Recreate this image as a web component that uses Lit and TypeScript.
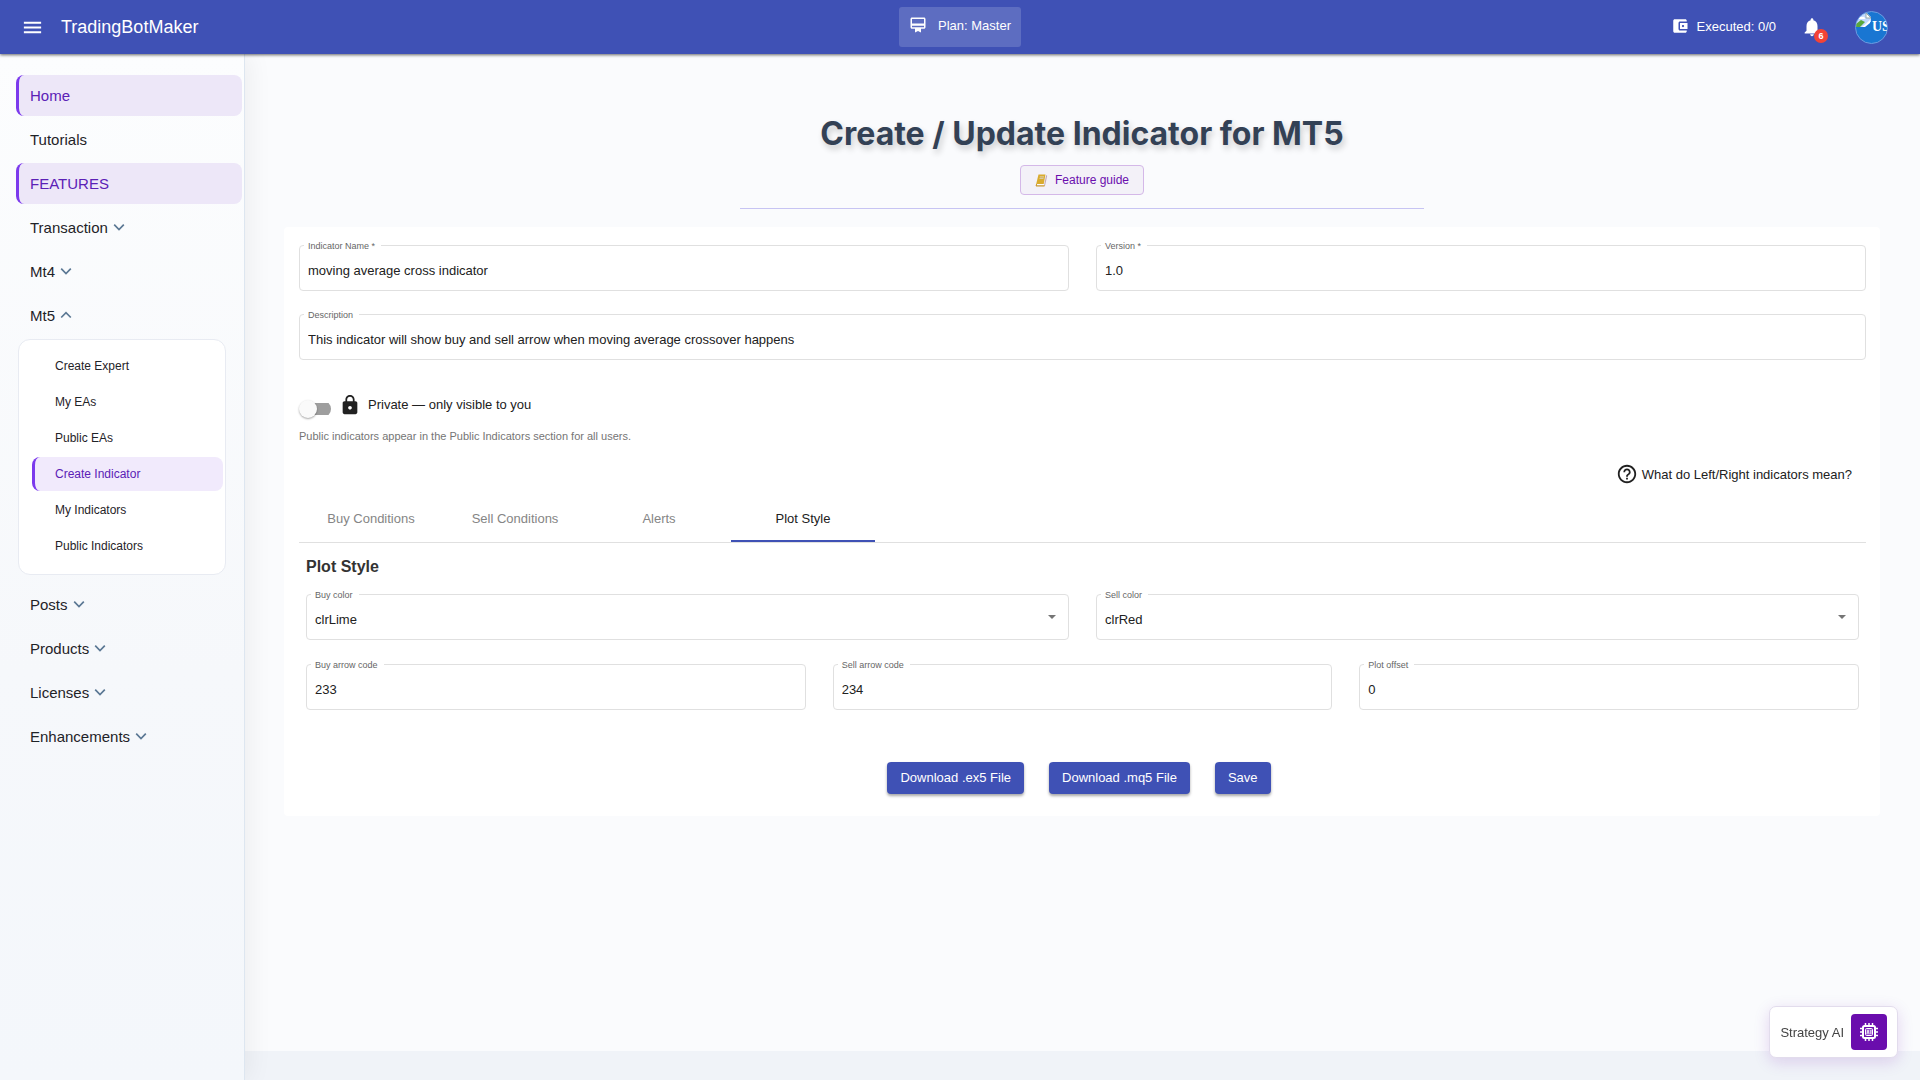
import { LitElement, html, css, svg } from "lit";
import { customElement, property, state } from "lit/decorators.js";
import { classMap } from "lit/directives/class-map.js";

const ICONS = {
  menu: "M3 18h18v-2H3v2zm0-5h18v-2H3v2zm0-7v2h18V6H3z",
  plan: "M20 2H4c-1.11 0-2 .89-2 2v11c0 1.11.89 2 2 2h4v5l4-2 4 2v-5h4c1.11 0 2-.89 2-2V4c0-1.11-.89-2-2-2zm0 13H4v-2h16v2zm0-5H4V4h16v6z",
  wallet:
    "M21 18v1c0 1.1-.9 2-2 2H5c-1.11 0-2-.9-2-2V5c0-1.1.89-2 2-2h14c1.1 0 2 .9 2 2v1h-9c-1.11 0-2 .9-2 2v8c0 1.1.89 2 2 2h9zm-9-2h10V8H12v8zm4-2.5c-.83 0-1.5-.67-1.5-1.5s.67-1.5 1.5-1.5 1.5.67 1.5 1.5-.67 1.5-1.5 1.5z",
  bell: "M12 22c1.1 0 2-.9 2-2h-4c0 1.1.89 2 2 2zm6-6v-5c0-3.07-1.64-5.64-4.5-6.32V4c0-.83-.67-1.5-1.5-1.5s-1.5.67-1.5 1.5v.68C7.63 5.36 6 7.92 6 11v5l-2 2v1h16v-1l-2-2z",
  lock: "M18 8h-1V6c0-2.76-2.24-5-5-5S7 3.24 7 6v2H6c-1.1 0-2 .9-2 2v10c0 1.1.9 2 2 2h12c1.1 0 2-.9 2-2V10c0-1.1-.9-2-2-2zm-6 9c-1.1 0-2-.9-2-2s.9-2 2-2 2 .9 2 2-.9 2-2 2zm3.1-9H8.9V6c0-1.71 1.39-3.1 3.1-3.1 1.71 0 3.1 1.39 3.1 3.1v2z",
  help: "M11 18h2v-2h-2v2zm1-16C6.48 2 2 6.48 2 12s4.48 10 10 10 10-4.48 10-10S17.52 2 12 2zm0 18c-4.41 0-8-3.59-8-8s3.59-8 8-8 8 3.59 8 8-3.59 8-8 8zm0-14c-2.21 0-4 1.79-4 4h2c0-1.1.9-2 2-2s2 .9 2 2c0 2-3 1.75-3 5h2c0-2.25 3-2.5 3-5 0-2.21-1.79-4-4-4z",
};

const icon = (name: keyof typeof ICONS, size: number) => html`
  <svg class="icon" width=${size} height=${size} viewBox="0 0 24 24" fill="currentColor" aria-hidden="true">
    <path d=${ICONS[name]}></path>
  </svg>
`;

@customElement("top-bar")
class TopBar extends LitElement {
  static styles = css`
    :host {
      display: block;
      position: relative;
      z-index: 2;
      color: #fff;
      background: #3f51b5;
      box-shadow: 0 1px 3px rgba(0, 0, 0, 0.6);
      font-size: 13px;
    }
    .bar {
      display: grid;
      grid-template-columns: 1fr auto 1fr;
      align-items: center;
      height: 54px;
      padding: 0 21px;
    }
    button {
      border: 0;
      padding: 0;
      background: none;
      color: inherit;
      font: inherit;
      cursor: pointer;
    }
    .icon {
      display: block;
    }
    .left {
      display: flex;
      align-items: center;
      gap: 17px;
    }
    .brand {
      font-size: 18px;
      color: inherit;
      text-decoration: none;
    }
    .plan {
      display: flex;
      align-items: flex-start;
      gap: 11px;
      height: 40px;
      padding: 9px 10px;
      box-sizing: border-box;
      border-radius: 3px;
      background: rgba(255, 255, 255, 0.16);
      line-height: 20px;
    }
    .right {
      display: flex;
      align-items: center;
      justify-content: flex-end;
      padding-right: 11px;
    }
    .executed {
      display: flex;
      align-items: flex-start;
      gap: 8px;
      margin-right: 25px;
      line-height: 20px;
    }
    .bell {
      position: relative;
      margin-right: 32px;
    }
    .badge {
      position: absolute;
      left: 13px;
      top: 13px;
      width: 14px;
      height: 14px;
      border-radius: 50%;
      background: #f44336;
      font-size: 9px;
      font-weight: 700;
      line-height: 14px;
      text-align: center;
    }
    .avatar {
      display: flex;
      align-items: center;
      width: 33px;
      height: 33px;
      box-sizing: border-box;
      border: 1px solid #6d9be0;
      border-radius: 50%;
      overflow: hidden;
      background: #1976d2;
      font-weight: 700;
      font-size: 14px;
      font-family: "Liberation Serif", serif;
    }
    .picture {
      flex: none;
      align-self: flex-start;
    }
  `;

  render() {
    return html`
      <header class="bar">
        <div class="left">
          <button aria-label="Toggle menu">${icon("menu", 23)}</button>
          <a class="brand" href="#">TradingBotMaker</a>
        </div>
        <button class="plan">${icon("plan", 18)}<span>Plan: Master</span></button>
        <div class="right">
          <span class="executed">${icon("wallet", 18)}<span>Executed: 0/0</span></span>
          <button class="bell" aria-label="Notifications">
            ${icon("bell", 22)}<span class="badge">6</span>
          </button>
          <button class="avatar" aria-label="Account">
            <svg class="picture" width="16" height="16" viewBox="0 0 16 16" aria-hidden="true">
              <path d="M0 1h11l4 4v5l-4 1-4 4H0z" fill="#c3d9ff"></path>
              <path d="M10 1v5h5z" fill="#fff" stroke="#9aa" stroke-width="1"></path>
              <path d="M3 7a2 2 0 0 1 3-2 2 2 0 0 1 3 2z" fill="#fff"></path>
              <path d="M0 12l5-4 4 2-5 5H0z" fill="#5aa83c"></path>
              <path d="M6 15l8-7v3l-5 4z" fill="#fff"></path>
            </svg>
            <span>US</span>
          </button>
        </div>
      </header>
    `;
  }
}

interface NavItem {
  label: string;
  active?: boolean;
  menu?: boolean;
  children?: { label: string; active?: boolean }[];
}

const NAV: NavItem[] = [
  { label: "Home", active: true },
  { label: "Tutorials" },
  { label: "FEATURES", active: true },
  { label: "Transaction", menu: true },
  { label: "Mt4", menu: true },
  {
    label: "Mt5",
    menu: true,
    children: [
      { label: "Create Expert" },
      { label: "My EAs" },
      { label: "Public EAs" },
      { label: "Create Indicator", active: true },
      { label: "My Indicators" },
      { label: "Public Indicators" },
    ],
  },
  { label: "Posts", menu: true },
  { label: "Products", menu: true },
  { label: "Licenses", menu: true },
  { label: "Enhancements", menu: true },
];

@customElement("side-nav")
class SideNav extends LitElement {
  static styles = css`
    :host {
      display: block;
      position: relative;
      z-index: 1;
      box-sizing: border-box;
      padding: 21px 2px 21px 16px;
      border-right: 1px solid #dde6f0;
      background: linear-gradient(#fcfdfe, #f6f8fb 60%, #f4f7fb);
      box-shadow: 4px 0 24px rgba(0, 0, 0, 0.06);
    }
    ul {
      display: flex;
      flex-direction: column;
      margin: 0;
      padding: 0;
      list-style: none;
    }
    .top {
      gap: 3px;
    }
    .item {
      display: flex;
      align-items: center;
      gap: 5px;
      width: 100%;
      height: 41px;
      box-sizing: border-box;
      padding: 0 11px 1px;
      border: 0;
      border-left: 3px solid transparent;
      border-radius: 8px;
      background: none;
      color: #1f2328;
      font: inherit;
      font-size: 15px;
      text-decoration: none;
      cursor: pointer;
    }
    .active {
      border-left-color: #7c3aed;
      background: #ede7f8;
      color: #5b21b6;
    }
    .sub {
      gap: 2px;
      margin: 3px 16px 6px 2px;
      padding: 9px 2px 11px 13px;
      border: 1px solid #e8ebf2;
      border-radius: 12px;
      background: #fff;
    }
    .sub .item {
      height: 34px;
      padding: 0 20px;
      font-size: 12px;
    }
    .sub .active {
      background: #f1eafc;
    }
  `;

  render() {
    return html`
      <nav aria-label="Main">
        <ul class="top">
          ${NAV.map(
            (n) => html`<li>
              ${n.menu
                ? html`<button class="item" aria-expanded=${n.children ? "true" : "false"}>
                    ${n.label}
                    <svg width="12" height="12" viewBox="0 0 12 12" fill="none" stroke="#5b7894" stroke-width="1.700" aria-hidden="true">
                      ${n.children
                        ? svg`<path d="M1.200 8.500l4.800-4.800 4.800 4.800"></path>`
                        : svg`<path d="M1.200 3.700l4.800 4.800 4.800-4.800"></path>`}
                    </svg>
                  </button>`
                : html`<a href="#" class=${classMap({ item: true, active: !!n.active })}>${n.label}</a>`}
              ${n.children
                ? html`<ul class="sub">
                    ${n.children.map(
                      (c) => html`<li>
                        <a href="#" class=${classMap({ item: true, active: !!c.active })}>${c.label}</a>
                      </li>`,
                    )}
                  </ul>`
                : ""}
            </li>`,
          )}
        </ul>
      </nav>
    `;
  }
}

@customElement("outlined-field")
class OutlinedField extends LitElement {
  @property() label = "";
  @property() value = "";
  @property({ type: Array }) options: string[] = [];

  static styles = css`
    :host {
      display: block;
      min-width: 0;
    }
    .field {
      position: relative;
      display: flex;
      border: 1px solid #e0e0e0;
      border-radius: 4px;
      background: #fff;
    }
    label {
      position: absolute;
      left: 4px;
      top: -5px;
      padding: 0 6px 0 4px;
      background: #fff;
      color: #666;
      font-size: 9px;
      line-height: 11px;
    }
    input,
    select {
      flex: 1;
      min-width: 0;
      height: 44px;
      box-sizing: border-box;
      margin: 0;
      padding: 5px 8px 1px;
      border: 0;
      outline: 0;
      border-radius: 4px;
      background: none;
      color: #212121;
      font: inherit;
      font-size: 13px;
      appearance: none;
    }
    .arrow {
      position: absolute;
      right: 12px;
      top: 20px;
      border: 4px solid transparent;
      border-top-color: #757575;
      border-bottom: 0;
      pointer-events: none;
    }
  `;

  render() {
    return html`
      <div class="field">
        ${this.options.length
          ? html`<select id="control">
                ${this.options.map((o) => html`<option ?selected=${o === this.value}>${o}</option>`)}
              </select>
              <span class="arrow"></span>`
          : html`<input id="control" type="text" .value=${this.value} />`}
        <label for="control">${this.label}</label>
      </div>
    `;
  }
}

@customElement("indicator-form")
class IndicatorForm extends LitElement {
  @state() private tab = "Plot Style";

  static styles = css`
    :host {
      display: block;
      padding: 18px 14px 22px 15px;
      border-radius: 4px;
      background: #fff;
      color: #212121;
      font-size: 13px;
    }
    .icon {
      display: block;
      flex: none;
    }
    .grid {
      display: grid;
      gap: 23px 27px;
    }
    .two {
      grid-template-columns: repeat(2, 1fr);
    }
    .three {
      grid-template-columns: repeat(3, 1fr);
    }
    .wide {
      grid-column: 1 / -1;
    }
    .visibility {
      display: flex;
      align-items: center;
      gap: 8px;
      margin-top: 31px;
      height: 27px;
    }
    .private {
      display: flex;
      align-items: center;
      gap: 7px;
    }
    .switch {
      align-self: flex-end;
      width: 32px;
      height: 18px;
      margin: 0;
      appearance: none;
      display: flex;
      align-items: center;
      background: linear-gradient(#9e9e9e, #9e9e9e) 8px 3px / 24px 12px no-repeat;
      border-radius: 9px;
      cursor: pointer;
    }
    .switch::before {
      content: "";
      width: 18px;
      height: 18px;
      border-radius: 50%;
      background: #fafafa;
      box-shadow: 0 1px 2px rgba(0, 0, 0, 0.35);
    }
    .hint {
      margin: 11px 0 0;
      color: #757575;
      font-size: 11px;
      line-height: 14px;
    }
    .help {
      display: flex;
      align-items: center;
      gap: 4px;
      margin: 20px 14px 12px auto;
      padding: 0;
      border: 0;
      background: none;
      color: inherit;
      font: inherit;
      cursor: pointer;
    }
    .tabs {
      display: flex;
      border-bottom: 1px solid #e0e0e0;
    }
    .tab {
      width: 144px;
      height: 45px;
      padding: 0 0 2px;
      border: 0;
      background: none;
      color: #858585;
      font: inherit;
      cursor: pointer;
    }
    .selected {
      padding: 0;
      border-bottom: 2px solid #3f51b5;
      color: #212121;
    }
    .panel {
      padding: 13px 7px 0;
    }
    .rows {
      display: grid;
      gap: 24px;
    }
    h2 {
      margin: 0 0 17px;
      color: #333;
      font-size: 16px;
      line-height: 21px;
    }
    .actions {
      display: flex;
      justify-content: center;
      gap: 25px;
      margin-top: 52px;
      padding-right: 7px;
    }
    .action {
      height: 32px;
      padding: 0 13px 1px;
      border: 0;
      border-radius: 4px;
      background: #3f51b5;
      color: #fff;
      font: inherit;
      font-weight: 500;
      box-shadow: 0 2px 3px rgba(0, 0, 0, 0.35);
      cursor: pointer;
    }
  `;

  render() {
    return html`
      <div class="grid two">
        <outlined-field label="Indicator Name *" value="moving average cross indicator"></outlined-field>
        <outlined-field label="Version *" value="1.0"></outlined-field>
        <outlined-field
          class="wide"
          label="Description"
          value="This indicator will show buy and sell arrow when moving average crossover happens"
        ></outlined-field>
      </div>
      <div class="visibility">
        <input class="switch" id="visibility" type="checkbox" role="switch" />
        <label class="private" for="visibility">${icon("lock", 22)}<span>Private — only visible to you</span></label>
      </div>
      <p class="hint">Public indicators appear in the Public Indicators section for all users.</p>
      <button class="help">${icon("help", 22)}<span>What do Left/Right indicators mean?</span></button>
      <div class="tabs" role="tablist">
        ${["Buy Conditions", "Sell Conditions", "Alerts", "Plot Style"].map(
          (t) => html`<button
            role="tab"
            aria-selected=${t === this.tab ? "true" : "false"}
            class=${classMap({ tab: true, selected: t === this.tab })}
            @click=${() => (this.tab = t)}
          >
            ${t}
          </button>`,
        )}
      </div>
      <section class="panel">
        <h2>Plot Style</h2>
        <div class="rows">
          <div class="grid two">
            <outlined-field label="Buy color" value="clrLime" .options=${["clrLime", "clrRed"]}></outlined-field>
            <outlined-field label="Sell color" value="clrRed" .options=${["clrLime", "clrRed"]}></outlined-field>
          </div>
          <div class="grid three">
            <outlined-field label="Buy arrow code" value="233"></outlined-field>
            <outlined-field label="Sell arrow code" value="234"></outlined-field>
            <outlined-field label="Plot offset" value="0"></outlined-field>
          </div>
        </div>
      </section>
      <div class="actions">
        <button class="action">Download .ex5 File</button>
        <button class="action">Download .mq5 File</button>
        <button class="action">Save</button>
      </div>
    `;
  }
}

@customElement("app-root")
class AppRoot extends LitElement {
  static styles = css`
    :host {
      display: flex;
      flex-direction: column;
      min-height: 100vh;
      font-family: "Liberation Sans", Arial, sans-serif;
      background: #f0f3f8;
    }
    .body {
      flex: 1;
      display: grid;
      grid-template-columns: 245px 1fr;
    }
    .page {
      display: flex;
      flex-direction: column;
      min-width: 0;
      margin-bottom: 29px;
      padding: 58px 40px 0 39px;
      background: #fafbfd;
    }
    .intro {
      display: flex;
      flex-direction: column;
      align-items: center;
      align-self: center;
      width: 684px;
      max-width: 100%;
      margin-bottom: 18px;
      padding-bottom: 13px;
      border-bottom: 1px solid #c7c4f3;
    }
    h1 {
      margin: 0 0 10px;
      color: #334155;
      font-family: Inter, sans-serif;
      font-size: 32px;
      font-weight: 700;
      line-height: 43px;
      text-align: center;
      text-shadow: 2px 4px 6px rgba(0, 0, 0, 0.2);
    }
    .guide {
      display: flex;
      align-items: center;
      gap: 7px;
      height: 30px;
      padding: 0 14px;
      border: 1px solid #d4b8e8;
      border-radius: 4px;
      background: #f3f1f8;
      color: #6a0dad;
      font: inherit;
      font-size: 12px;
      cursor: pointer;
    }
    .ai {
      position: fixed;
      right: 22px;
      bottom: 22px;
      z-index: 3;
      display: flex;
      align-items: center;
      gap: 7px;
      padding: 7px 10px;
      border: 1px solid #e2dcec;
      border-radius: 7px;
      background: #fff;
      box-shadow: 0 4px 16px rgba(106, 13, 173, 0.16);
      color: #444;
      font-size: 13px;
    }
    .chip {
      display: grid;
      place-items: center;
      width: 36px;
      height: 36px;
      padding: 0;
      border: 0;
      border-radius: 4px;
      background: #6a0dad;
      color: #fff;
      cursor: pointer;
    }
  `;

  render() {
    return html`
      <top-bar></top-bar>
      <div class="body">
        <side-nav></side-nav>
        <main class="page">
          <div class="intro">
            <h1>Create / Update Indicator for MT5</h1>
            <button class="guide">
              <svg width="13" height="13" viewBox="0 0 13 13" aria-hidden="true">
                <path d="M3.500 .5h7L8.700 10H1.200z" fill="#d9ab2e"></path>
                <path d="M11.200 1l1 .8-2.200 10-.9-.6z" fill="#c3a9b4"></path>
                <path d="M1.200 10L.6 11.500l.6 1h8.200l.5-1.300H1.800l.4-1.200z" fill="#c9952a"></path>
                <path d="M2.200 10.600h7" stroke="#fff" stroke-width="0.700"></path>
                <path d="M4.800 2.800h4.200M4.500 4.500h4" stroke="#d8c9a4" stroke-width="1.200"></path>
              </svg>
              <span>Feature guide</span>
            </button>
          </div>
          <indicator-form></indicator-form>
        </main>
      </div>
      <aside class="ai">
        <span id="ai-label">Strategy AI</span>
        <button class="chip" aria-labelledby="ai-label">
          <svg width="20" height="20" viewBox="0 0 20 20" fill="none" stroke="currentColor" aria-hidden="true">
            <path
              d="M6.500 1v3M10 1v3M13.500 1v3M6.500 16v3M10 16v3M13.500 16v3M1 6.500h3M1 10h3M1 13.500h3M16 6.500h3M16 10h3M16 13.500h3"
              stroke-width="1.500"
            ></path>
            <rect x="4" y="4" width="12" height="12" rx="1.500" stroke-width="2"></rect>
            <rect x="6.500" y="6.500" width="7" height="7" rx="1" stroke-width="1" fill="#9a55cc"></rect>
            <path d="M8 12l1-4 1 4M11.800 8v4" stroke-width="0.800"></path>
          </svg>
        </button>
      </aside>
    `;
  }
}
